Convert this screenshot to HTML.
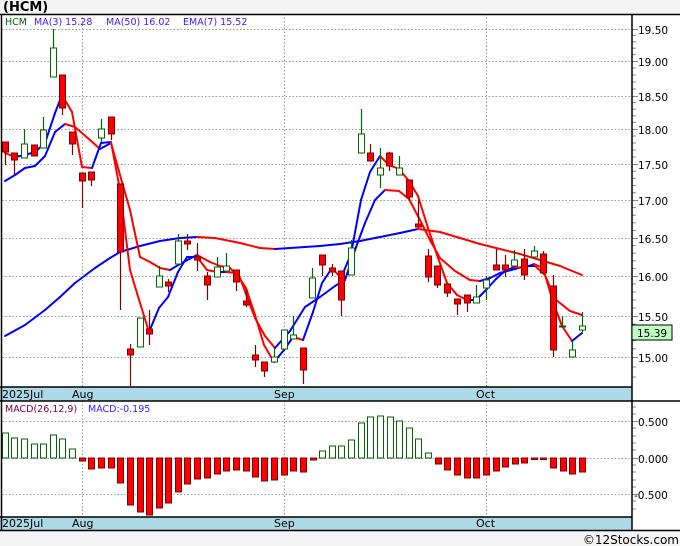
<!DOCTYPE html>
<html><head><meta charset="utf-8">
<style>
html,body{margin:0;padding:0;background:#f4f4f4;}
body{width:680px;height:546px;overflow:hidden;position:relative;font-family:"DejaVu Sans","Liberation Sans",sans-serif;}
svg{position:absolute;left:0;top:0;}
text{font-family:"DejaVu Sans","Liberation Sans",sans-serif;}
</style></head><body>
<svg id="s" width="680" height="546" viewBox="0 0 680 546" xmlns="http://www.w3.org/2000/svg">
<rect x="0" y="14" width="680" height="517" fill="#fff"/>
<text x="3" y="11" font-size="13" font-weight="bold" fill="#000">(HCM)</text>
<g id="grid"></g>
<g id="lines"></g>
<g id="cand"></g>
<g id="macd"></g>
<rect x="0" y="387" width="632" height="14" fill="#add8e6"/>
<rect x="0" y="517" width="632" height="13" fill="#add8e6"/>
<g font-size="11" fill="#000">
<text x="2" y="398">2025Jul</text><text x="72" y="398">Aug</text><text x="274" y="398">Sep</text><text x="476" y="398">Oct</text>
<text x="2" y="527">2025Jul</text><text x="72" y="527">Aug</text><text x="274" y="527">Sep</text><text x="476" y="527">Oct</text>
</g>
<g stroke="#000" stroke-width="1.5" fill="none">
<line x1="0" y1="14.5" x2="680" y2="14.5"/>
<line x1="0" y1="387" x2="632" y2="387"/>
<line x1="0" y1="401" x2="680" y2="401"/>
<line x1="0" y1="517" x2="632" y2="517"/>
<line x1="0" y1="530.5" x2="680" y2="530.5"/>
<line x1="632" y1="14" x2="632" y2="531"/>
<line x1="1.5" y1="14" x2="1.5" y2="531"/>
</g>
<g font-size="10.5" fill="#000">
<text x="638" y="34">19.50</text><text x="638" y="66">19.00</text><text x="638" y="101">18.50</text>
<text x="638" y="134">18.00</text><text x="638" y="169">17.50</text><text x="638" y="205">17.00</text>
<text x="638" y="243">16.50</text><text x="638" y="281">16.00</text><text x="638" y="321">15.50</text>
<text x="638" y="362">15.00</text>
<text x="638" y="426">0.500</text><text x="638" y="463">0.000</text><text x="634" y="499">-0.500</text>
</g>
<rect x="632" y="325" width="40" height="15" fill="#c0ffc0" stroke="#000" stroke-width="1"/>
<text x="637" y="337" font-size="10.5" fill="#000">15.39</text>
<text x="5" y="25" font-size="9.5" fill="#006400">HCM</text>
<text x="34" y="25" font-size="9.5" fill="#3a1aff">MA(3)  15.28  </text>
<text x="106" y="25" font-size="9.5" fill="#3a1aff">MA(50)  16.02</text>
<text x="183" y="25" font-size="9.5" fill="#3a1aff">EMA(7)  15.52</text>
<text x="5" y="412" font-size="9.5" fill="#800040">MACD(26,12,9)</text>
<text x="88" y="412" font-size="9.5" fill="#3a1aff">MACD:-0.195</text>
<text x="679" y="544" font-size="12" fill="#000" text-anchor="end">©12Stocks.com</text>
</svg>
<script>
var NS="http://www.w3.org/2000/svg";
function el(p,t,a){var e=document.createElementNS(NS,t);for(var k in a)e.setAttribute(k,a[k]);document.getElementById(p).appendChild(e);return e;}
var hy=[29,61,96,129,164,200,238,276,316,357];
hy.forEach(function(y){el("grid","line",{x1:2,y1:y+.5,x2:632,y2:y+.5,stroke:"#999","stroke-dasharray":"1.5,2"});el("grid","line",{x1:632,y1:y+.5,x2:638,y2:y+.5,stroke:"#888"});});
for(var i=0;i<hy.length-1;i++){for(var j=1;j<5;j++){var y=hy[i]+(hy[i+1]-hy[i])*j/5; el("grid","line",{x1:632,y1:y,x2:636,y2:y,stroke:"#888"});}}
[367,377].forEach(function(y){el("grid","line",{x1:632,y1:y,x2:636,y2:y,stroke:"#888"});});
[421,458,494].forEach(function(y){el("grid","line",{x1:2,y1:y+.5,x2:632,y2:y+.5,stroke:"#999","stroke-dasharray":"1.5,2"});el("grid","line",{x1:632,y1:y+.5,x2:638,y2:y+.5,stroke:"#888"});});
[407,414,428,436,443,450,465,472,480,487,501,509].forEach(function(y){el("grid","line",{x1:632,y1:y,x2:636,y2:y,stroke:"#888"});});
[82,284,486].forEach(function(x){el("grid","line",{x1:x+.5,y1:14,x2:x+.5,y2:387,stroke:"#999","stroke-dasharray":"1.5,2"});el("grid","line",{x1:x+.5,y1:401,x2:x+.5,y2:517,stroke:"#999","stroke-dasharray":"1.5,2"});});
var C=[[5,'r',142,152,142,165],[14,'r',153,160,153,175],[24,'g',144,158,129,158],[34,'r',145,156,145,156],[43,'g',130,148,117,148],[53,'g',48,77,29,77],[62,'r',75,108,75,115],[72,'r',132,144,132,155],[82,'r',173,181,173,208],[91,'r',172,180,172,186],[101,'g',129,138,119,142],[111,'r',117,134,117,140],[120,'r',184,252,184,310],[130,'r',349,355,344,386],[140,'g',318,347,318,347],[149,'r',329,334,310,345],[159,'g',276,287,266,287],[168,'r',282,286,279,292],[178,'g',241,264,234,264],[187,'r',241,244,234,250],[197,'r',257,260,243,271],[207,'r',276,285,272,300],[217,'g',267,277,257,277],[226,'g',266,271,253,271],[236,'r',270,282,270,291],[246,'r',301,305,290,307],[255,'r',355,360,345,367],[264,'r',362,371,362,377],[274,'g',357,362,348,362],[284,'g',330,349,330,349],[293,'g',335,339,316,339],[303,'r',348,370,348,384],[312,'g',278,298,268,298],[322,'r',255,265,255,276],[332,'r',268,272,264,276],[341,'r',271,300,271,316],[351,'g',248,275,240,275],[361,'g',134,153,109,153],[370,'r',153,161,144,161],[380,'g',168,175,148,188],[389,'r',153,166,152,171],[399,'g',168,175,156,175],[409,'r',180,197,180,200],[418,'r',224,227,200,228],[428,'r',256,277,249,282],[437,'r',266,285,266,288],[447,'r',284,293,284,297],[457,'r',299,304,299,315],[467,'r',295,303,295,312],[476,'g',297,303,285,303],[486,'g',280,288,276,300],[496,'r',265,270,249,270],[505,'r',265,270,255,277],[514,'g',260,266,250,266],[524,'r',259,275,249,280],[534,'g',251,257,246,257],[543,'r',254,273,251,273],[553,'r',286,350,275,357],[562,'g',326,327,316,327],[572,'g',350,357,341,357],[582,'g',326,330,312,332]];
C.forEach(function(c){var g=c[1]=='g';var sc=g?"#006400":"#800000";
el("cand","line",{x1:c[0]+.5,y1:c[4],x2:c[0]+.5,y2:c[5],stroke:sc,"stroke-width":1.2});
el("cand","rect",{x:c[0]-2.5,y:c[2],width:6,height:Math.max(1,c[3]-c[2]),fill:g?"#fff":"#f00",stroke:sc,"stroke-width":1});});
function line(pts,col){for(var i=0;i<pts.length-1;i++){var a=pts[i],b=pts[i+1];var c=col?col:(b[1]<=a[1]?"#0000ff":"#ff0000");el("lines","line",{x1:a[0],y1:a[1],x2:b[0],y2:b[1],stroke:c,"stroke-width":2,"stroke-linecap":"round"});}}
var L=[[5,336],[25,325],[45,310],[60,297],[75,283],[95,268],[110,258],[120,252],[140,246],[160,241],[180,238],[197,237],[215,238],[240,243],[260,248],[275,249],[290,248],[320,246],[340,244],[360,241],[380,237],[400,233],[418,229],[440,232],[460,238],[480,244],[500,249],[520,254],[540,260],[560,266],[582,275]];
line(L);
var A=[[5,181],[15,175],[25,168],[35,166],[45,156],[55,132],[65,124],[75,127],[90,140],[100,149],[111,143],[120,175],[130,210],[140,257],[150,262],[160,268],[170,270],[180,264],[197,255],[210,262],[220,266],[230,268],[240,278],[255,318],[265,336],[275,348],[290,331],[305,307],[320,297],[335,286],[345,280],[355,250],[365,223],[375,200],[385,190],[399,191],[409,199],[420,220],[430,240],[440,258],[455,271],[470,280],[480,281],[490,278],[500,273],[515,269],[525,266],[535,266],[545,275],[555,299],[570,311],[582,315]];
line(A);
var B=[[5,153],[15,157],[25,155],[35,152],[45,143],[55,113],[62,95],[72,112],[82,167],[92,168],[101,143],[111,142],[120,190],[130,270],[140,303],[149,332],[159,308],[168,297],[178,272],[187,257],[197,257],[207,270],[217,272],[226,272],[236,273],[246,288],[255,315],[264,345],[274,362],[284,350],[293,337],[303,340],[313,312],[322,283],[332,268],[341,278],[351,254],[361,200],[370,172],[380,156],[389,165],[399,169],[409,181],[418,196],[428,228],[437,255],[447,283],[457,295],[467,300],[476,300],[486,290],[496,279],[505,271],[514,267],[524,268],[534,264],[543,268],[553,302],[562,326],[572,341],[582,333]];
line(B);
var M=[[5,433],[14,438],[24,439],[34,444],[43,444],[53,435],[62,439],[72,449],[82,461],[91,469],[101,468],[111,468],[120,483],[130,505],[140,512],[149,515],[159,508],[168,503],[178,492],[187,484],[197,479],[207,478],[217,474],[226,471],[236,470],[246,471],[255,477],[264,481],[274,480],[284,475],[293,471],[303,472],[313,460],[322,451],[332,446],[341,446],[351,440],[361,423],[370,417],[380,416],[390,417],[399,421],[409,428],[418,439],[428,453],[438,464],[447,470],[457,475],[467,478],[476,478],[486,475],[496,471],[505,467],[515,464],[524,463],[534,459.5],[543,459.5],[553,468],[563,471],[572,474],[582,472]];
var Z=458;
M.forEach(function(m){if(m[1]<Z){el("macd","rect",{x:m[0]-2.5,y:m[1],width:6,height:Z-m[1],fill:"#fff",stroke:"#006400","stroke-width":1});}else{el("macd","rect",{x:m[0]-2.5,y:Z,width:6,height:Math.max(1,m[1]-Z),fill:"#f00",stroke:"#800000","stroke-width":1});}});
</script>
</body></html>
